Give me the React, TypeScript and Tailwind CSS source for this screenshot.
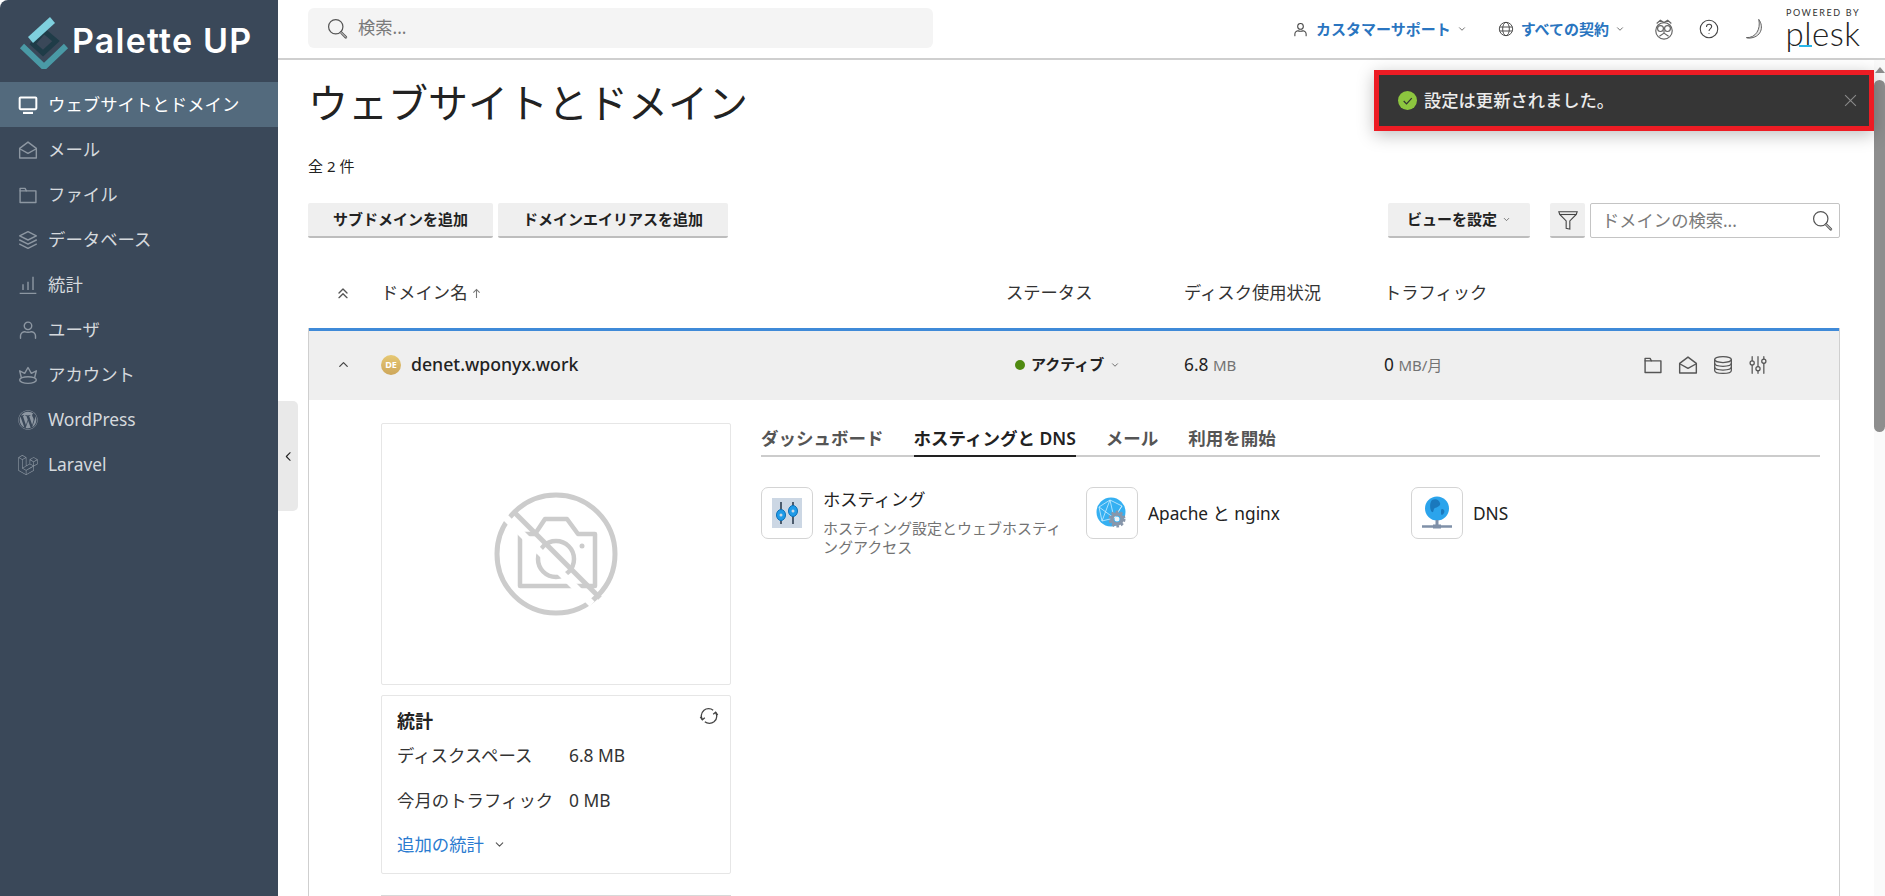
import React from "react";
import { FaWordpress, FaLaravel } from "react-icons/fa";

const font = { fontFamily: '"Noto Sans","Open Sans","Noto Sans CJK JP",sans-serif' };

type IP = { className?: string };
const S = ({ className, children, vb = "0 0 24 24", sw = 1.5 }: { className?: string; children: React.ReactNode; vb?: string; sw?: number }) => (
  <svg viewBox={vb} fill="none" stroke="currentColor" strokeWidth={sw} strokeLinecap="round" strokeLinejoin="round" className={className}>{children}</svg>
);
const Monitor = ({ className }: IP) => <S className={className} sw={2.4}><rect x="2" y="3" width="20" height="14" rx="1" /><path d="M6 21.500h12" strokeWidth="2.600" strokeLinecap="butt" /></S>;
const MailOpen = ({ className }: IP) => <S className={className} sw={1.7}><path d="M2 10 12 2.500 22 10v11.500H2z" /><path d="M2 10.500 12 16l10-5.500" /></S>;
const Folder = ({ className }: IP) => <S className={className} sw={1.7}><path d="M2.500 21V4h6l1.500 3h11.500v14z" /><path d="M2.500 7H10" /></S>;
const Layers = ({ className }: IP) => <S className={className} sw={1.7}><path d="M12 2 22 7l-10 5L2 7z" /><path d="M2 12l10 5 10-5" /><path d="M2 17l10 5 10-5" /></S>;
const Bars = ({ className }: IP) => <S className={className} sw={1.7}><path d="M2 22h20M6 18v-7M12 18V8M18 18V2" strokeLinecap="butt" /></S>;
const UserI = ({ className }: IP) => <S className={className} sw={1.7}><circle cx="12" cy="7" r="4.500" /><path d="M3 22v-3c0-3 3-5 5-5 1.500 1 6.500 1 8 0 2 0 5 2 5 5v3" /></S>;
const Crown = ({ className }: IP) => <S className={className} sw={1.7}><path d="M4 15 2 7l6 3 4-7 4 7 6-3-2 8" /><ellipse cx="12" cy="18" rx="10" ry="4" /></S>;
const Chev = ({ className, d = "M6 9l6 6 6-6" }: IP & { d?: string }) => <S className={className} sw={2}><path d={d} /></S>;
const SearchI = ({ className }: IP) => (
  <svg viewBox="0 0 24 24" fill="none" stroke="currentColor" className={className}>
    <circle cx="10" cy="10" r="8.200" strokeWidth="1.400" />
    <path d="M16 16.500l5.500 5.500" strokeWidth="3" strokeLinecap="round" />
    <path d="M16 16.500l5.500 5.500" strokeWidth="1" stroke="#fff" strokeLinecap="round" />
  </svg>
);
const Sliders = ({ className }: IP) => (
  <S className={className}>
    <path d="M5 2v5M5 12v10M12 2v12M12 19v3M19 2v3M19 10v12" />
    <circle cx="5" cy="9.500" r="2.500" /><circle cx="12" cy="16.500" r="2.500" /><circle cx="19" cy="7.500" r="2.500" />
  </S>
);
const Db = ({ className }: IP) => (
  <S className={className}>
    <ellipse cx="12" cy="5.500" rx="10" ry="3.500" />
    <path d="M2 5.500v13c0 2 4.500 3.500 10 3.500s10-1.500 10-3.500v-13" />
    <path d="M2 10c0 2 4.500 3.500 10 3.500S22 12 22 10M2 14.500c0 2 4.500 3.500 10 3.500s10-1.500 10-3.500" />
  </S>
);

const nav: { t: string; I: React.ComponentType<IP>; a?: boolean }[] = [
  { t: "ウェブサイトとドメイン", I: Monitor, a: true },
  { t: "メール", I: MailOpen },
  { t: "ファイル", I: Folder },
  { t: "データベース", I: Layers },
  { t: "統計", I: Bars },
  { t: "ユーザ", I: UserI },
  { t: "アカウント", I: Crown },
  { t: "WordPress", I: FaWordpress },
  { t: "Laravel", I: FaLaravel },
];

function Sidebar() {
  return (
    <aside className="w-[278px] shrink-0 bg-[#3a4859] rounded-tl-[8px] h-full">
      <div className="h-[82px] flex items-center pl-[19px] gap-[3px]">
        <svg viewBox="0 0 50 56" className="w-[50px] h-[56px] shrink-0">
          <path d="M25 18l12 10-13 12-10-9z" fill="none" stroke="#1f3c48" strokeWidth="5" />
          <path d="M9 24 31 4l5 6-22 20z" fill="#7fd0de" />
          <path d="M3 33l22 21 22-21" fill="none" stroke="#4a9aa6" strokeWidth="6" />
        </svg>
        <span className="text-white text-[34px] font-semibold tracking-[1.200px] leading-none whitespace-nowrap" style={{ fontFamily: '"Inter",sans-serif' }}>Palette UP</span>
      </div>
      <nav>
        {nav.map(({ t, I, a }) => (
          <div key={t} className={`h-[45px] flex items-center pl-[18px] gap-[10px] text-[17.400px] ${a ? "bg-[#536a7d] text-white" : "text-[#d5d9dd]"}`}>
            <I className={`w-[20px] h-[20px] shrink-0 ${a ? "text-white" : "text-[#8d97a2]"}`} />
            <span>{t}</span>
          </div>
        ))}
      </nav>
    </aside>
  );
}

function Header() {
  return (
    <header className="h-[60px] shrink-0 border-b-2 border-[#cfcfcf] flex items-center pl-[30px] pr-[24px] bg-white">
      <div className="w-[625px] h-[40px] -mt-[2px] bg-[#f4f4f4] rounded-[6px] flex items-center pl-[19px] gap-[10px] text-[#7a7a7a] text-[17.300px]">
        <SearchI className="w-[21px] h-[21px] text-[#555]" />
        <span>検索...</span>
      </div>
      <div className="ml-auto flex items-center h-full text-[#555]">
        <UserI className="w-[15px] h-[15px] text-[#444]" />
        <span className="ml-[8px] text-[15px] font-bold text-[#2a75c0]">カスタマーサポート</span>
        <Chev className="w-[10px] h-[10px] ml-[6px]" />
        <svg viewBox="0 0 24 24" fill="none" stroke="#444" strokeWidth="1.400" className="w-[16px] h-[16px] ml-[31px]">
          <circle cx="12" cy="12" r="10" /><ellipse cx="12" cy="12" rx="5" ry="10" /><path d="M2.500 9h19M2.500 15h19" />
        </svg>
        <span className="ml-[7px] text-[15px] font-bold text-[#2a75c0]">すべての契約</span>
        <Chev className="w-[10px] h-[10px] ml-[6px]" />
        <svg viewBox="0 0 24 24" fill="none" stroke="#666" strokeWidth="1.300" className="w-[22px] h-[22px] ml-[28px]">
          <path d="M4 6 8 2.500l4 2.500 4-2.500L20 6" /><circle cx="12" cy="14" r="9" /><circle cx="8.200" cy="11.500" r="3.200" /><circle cx="15.800" cy="11.500" r="3.200" /><path d="M12 13.500v3M7 20l5-3.500 5 3.500" />
        </svg>
        <svg viewBox="0 0 24 24" fill="none" stroke="#444" strokeWidth="1.300" className="w-[20px] h-[20px] ml-[24px]">
          <circle cx="12" cy="12" r="10.500" /><path d="M9 9.500c0-2 1.500-3.200 3.200-3.200 1.800 0 3 1.200 3 2.800 0 2.500-3.200 2.500-3.200 5.400" /><path d="M12 17.500v.500" strokeWidth="1.800" />
        </svg>
        <svg viewBox="0 0 24 24" fill="#e8e8e8" stroke="#555" strokeWidth="1" className="w-[22px] h-[22px] ml-[26px]">
          <path d="M15 1.500c6 8 3 20-11 20.500 -1 0-2-.300-2.500-.600 10 .600 16-9 13.500-19.900z" />
        </svg>
        <div className="ml-[18px] w-[76px] flex flex-col items-center relative pb-[2px]">
          <span className="text-[9px] leading-[10px] tracking-[1.600px] text-[#333] whitespace-nowrap" style={{ fontFamily: '"Lato",sans-serif' }}>POWERED BY</span>
          <span className="text-[33px] leading-[31px] text-[#222] font-light tracking-[0.500px]" style={{ fontFamily: '"Lato",sans-serif' }}>plesk</span>
          <span className="absolute left-[14px] bottom-[4px] w-[13px] h-[2px] bg-[#29b6e8]" />
        </div>
      </div>
    </header>
  );
}

function Btn({ children, className = "" }: { children: React.ReactNode; className?: string }) {
  return <div className={`h-[35px] flex items-center justify-center bg-[#efefef] rounded-[2px] border-b-2 border-[#bdbdbd] text-[15px] font-bold text-[#222] ${className}`}>{children}</div>;
}

function CameraOff() {
  return (
    <svg viewBox="0 0 132 132" fill="none" stroke="#cccccc" strokeWidth="5" className="w-[132px] h-[132px]">
      <circle cx="66" cy="66" r="59" />
      <path d="M30 46h15l10-15h22l11 15h17v52H30z" strokeLinejoin="round" strokeWidth="4.500" />
      <circle cx="66" cy="71" r="18" strokeWidth="4.500" />
      <circle cx="92" cy="58" r="2.500" fill="#ccc" stroke="none" />
      <path d="M16 22l90 90" stroke="#fff" strokeWidth="7" transform="translate(-4 4)" />
      <path d="M23 23l87 87" stroke="#cccccc" strokeWidth="5" />
    </svg>
  );
}

function Tile({ icon, title, desc }: { icon: React.ReactNode; title: string; desc?: string }) {
  return (
    <div className={`flex gap-[10px] w-[325px] ${desc ? "" : "items-center h-[52px]"}`}>
      <div className="w-[52px] h-[52px] shrink-0 border border-[#d4d4d4] rounded-[7px] flex items-center justify-center">{icon}</div>
      <div className="w-[242px] pt-[1px]">
        <div className={`text-[17.300px] text-[#222] ${desc ? "leading-[24px]" : ""}`}>{title}</div>
        {desc && <div className="text-[15px] leading-[19px] text-[#737373] mt-[7px]">{desc}</div>}
      </div>
    </div>
  );
}

function Row() {
  return (
    <section className="border-x border-[#cfcfcf] flex-1 min-h-0">
      <div className="h-[72px] pb-[2px] bg-[#efefef] border-t-[3px] border-[#3f8ad8] grid grid-cols-[72px_625px_178px_200px_1fr] items-center">
        <Chev d="M6 15l6-6 6 6" className="w-[15px] h-[15px] ml-[27px] text-[#444]" />
        <div className="flex items-center gap-[10px]">
          <div className="w-[20px] h-[20px] rounded-full bg-gradient-to-b from-[#e6c873] to-[#cda65a] flex items-center justify-center text-white text-[9px] font-bold">DE</div>
          <span className="text-[17.700px] font-medium text-[#222] leading-none">denet.wponyx.work</span>
        </div>
        <div className="flex items-center pl-[9px]">
          <span className="w-[10px] h-[10px] rounded-full bg-[#4f8a10]" />
          <span className="ml-[6px] text-[15px] font-bold text-[#222]">アクティブ</span>
          <Chev className="w-[10px] h-[10px] ml-[6px] text-[#555]" />
        </div>
        <div className="text-[17.300px] text-[#222]">6.8 <span className="text-[15px] text-[#737373]">MB</span></div>
        <div className="flex items-center">
          <div className="text-[17.300px] text-[#222] w-[259px]">0 <span className="text-[15px] text-[#737373]">MB/月</span></div>
          <div className="flex items-center gap-[15px] text-[#555]">
            <Folder className="w-[20px] h-[20px]" />
            <MailOpen className="w-[20px] h-[20px]" />
            <Db className="w-[20px] h-[20px]" />
            <Sliders className="w-[20px] h-[20px]" />
          </div>
        </div>
      </div>
      <div className="pl-[72px] pt-[23px] flex">
        <div className="w-[350px] shrink-0">
          <div className="h-[262px] border border-[#e6e6e6] rounded-[2px] flex items-center justify-center">
            <CameraOff />
          </div>
          <div className="h-[179px] mt-[10px] border border-[#e6e6e6] rounded-[2px] relative pl-[15px] pt-[12px] text-[17.400px] text-[#333]">
            <svg viewBox="0 0 24 24" fill="none" stroke="#444" strokeWidth="1.500" className="absolute right-[11px] top-[10px] w-[20px] h-[20px]">
              <path d="M4 16a9 9 0 0 1 2-11c3-2.500 8-2.500 11 0" /><path d="M20 8a9 9 0 0 1-2 11c-3 2.500-8 2.500-11 0" /><path d="M1.500 13 4 16.500 7 14M22.500 11 20 7.500 17 10" />
            </svg>
            <div className="text-[18px] font-bold text-[#222] leading-[26px]">統計</div>
            <div className="grid grid-cols-[172px_1fr] auto-rows-[45px] items-center -mt-[1px]">
              <span>ディスクスペース</span><span>6.8 MB</span>
              <span>今月のトラフィック</span><span>0 MB</span>
            </div>
            <div className="flex items-center text-[#2a7bd0] mt-[-1px] h-[45px]">
              追加の統計
              <Chev className="w-[13px] h-[13px] ml-[9px] text-[#555]" />
            </div>
          </div>
          <div className="h-px bg-[#d8d8d8] mt-[21px]" />
        </div>
        <div className="ml-[30px] flex-1 pr-[19px]">
          <div className="flex gap-[30px] border-b-2 border-[#ccc] h-[34px] text-[17.500px] font-semibold text-[#555]">
            <span className="leading-[31px]">ダッシュボード</span>
            <span className="leading-[31px] text-[#222] border-b-2 border-[#222] h-[34px]">ホスティングと DNS</span>
            <span className="leading-[31px]">メール</span>
            <span className="leading-[31px]">利用を開始</span>
          </div>
          <div className="flex mt-[30px]">
            <Tile
              title="ホスティング"
              desc="ホスティング設定とウェブホスティングアクセス"
              icon={
                <svg viewBox="0 0 30 30" className="w-[30px] h-[30px]">
                  <rect width="30" height="30" fill="#ccd7e4" />
                  <path d="M9 4v22M21 4v22" stroke="#2c3e50" strokeWidth="1.600" />
                  <ellipse cx="9" cy="17" rx="4.500" ry="5.500" fill="#1f9be8" stroke="#0e6fb5" strokeWidth="1" />
                  <ellipse cx="21" cy="13" rx="4.500" ry="5.500" fill="#1f9be8" stroke="#0e6fb5" strokeWidth="1" />
                  <circle cx="9" cy="17" r="1.500" fill="#ccd7e4" /><circle cx="21" cy="13" r="1.500" fill="#ccd7e4" />
                </svg>
              }
            />
            <Tile
              title="Apache と nginx"
              icon={
                <svg viewBox="0 0 32 32" className="w-[32px] h-[32px]">
                  <circle cx="15" cy="15" r="14.500" fill="#35b0f2" />
                  <path d="M3 10l11-7 12 6-8 12-12 3zM14 3l4 18M3 10l15 11M26 9l-8 12M6 24l8-21" stroke="#cdeeff" strokeWidth="0.800" fill="none" />
                  <circle cx="21" cy="22" r="7" fill="none" stroke="#8796aa" strokeWidth="3" strokeDasharray="2.500 2" />
                  <circle cx="21" cy="22" r="5" fill="none" stroke="#8796aa" strokeWidth="3.500" />
                  <circle cx="21" cy="22" r="2.500" fill="#eef3f8" />
                </svg>
              }
            />
            <Tile
              title="DNS"
              icon={
                <svg viewBox="0 0 32 34" className="w-[32px] h-[34px]">
                  <circle cx="16" cy="12.500" r="12" fill="#2ba4ec" />
                  <path d="M11 4c4-2 7 0 8 3s-3 4-5 5-1 5-3 4-3-9 0-12zM21 13c2 0 3 2 2 4s-3 3-3 0 0-4 1-4z" fill="#1a78bd" />
                  <path d="M1 30.500h30" stroke="#7f90a8" strokeWidth="2.500" />
                  <path d="M16 24v6" stroke="#7f90a8" strokeWidth="3" />
                  <rect x="12" y="28.500" width="8" height="4" fill="#7f90a8" />
                </svg>
              }
            />
          </div>
        </div>
      </div>
    </section>
  );
}

export default function App() {
  return (
    <div className="w-[1885px] h-[896px] flex overflow-hidden bg-white text-[#222] relative" style={font}>
      <Sidebar />
      <div className="flex-1 min-w-0 flex flex-col">
        <Header />
        <div className="flex-1 min-h-0 flex">
          <main className="flex-1 min-w-0 pl-[30px] pr-[34px] flex flex-col">
            <h1 className="text-[40px] leading-[52px] font-normal text-[#222] mt-[17px]">ウェブサイトとドメイン</h1>
            <div className="text-[15px] leading-[20px] mt-[27px]">全 2 件</div>
            <div className="flex items-center mt-[27px]">
              <Btn className="w-[185px]">サブドメインを追加</Btn>
              <Btn className="w-[230px] ml-[5px]">ドメインエイリアスを追加</Btn>
              <Btn className="w-[142px] ml-auto gap-[5px]">ビューを設定<Chev className="w-[9px] h-[9px] text-[#555]" /></Btn>
              <Btn className="w-[35px] ml-[20px]">
                <svg viewBox="0 0 24 24" fill="none" stroke="#444" strokeWidth="1.200" className="w-[22px] h-[22px]"><path d="M2 3h20l-1 3-7 7v9l-4-1v-8L3 6z" /><path d="M3 6h18" /></svg>
              </Btn>
              <div className="w-[250px] h-[35px] ml-[5px] border border-[#c4c4c4] rounded-[2px] flex items-center pl-[11px] pr-[6px] text-[17.300px] text-[#7a7a7a]">
                <span>ドメインの検索...</span>
                <SearchI className="w-[21px] h-[21px] ml-auto text-[#555]" />
              </div>
            </div>
            <div className="grid grid-cols-[73px_625px_178px_200px_1fr] items-center h-[90px] pt-[20px] text-[17.300px] text-[#333]">
              <Chev d="M6 12l6-6 6 6M6 19l6-6 6 6" className="w-[16px] h-[16px] ml-[27px] text-[#555]" />
              <div className="flex items-center gap-[5px]">ドメイン名
                <svg viewBox="0 0 10 12" fill="none" stroke="#777" strokeWidth="1.200" className="w-[9px] h-[11px]"><path d="M5 11V1.500M1.500 5 5 1.500 8.500 5" /></svg>
              </div>
              <span>ステータス</span>
              <span>ディスク使用状況</span>
              <span>トラフィック</span>
            </div>
            <Row />
          </main>
          <div className="w-[11px] shrink-0 pt-[7px] flex flex-col items-center bg-[#fafafa]">
            <div className="w-0 h-0 border-x-[5px] border-x-transparent border-b-[6px] border-b-[#8e8e8e]" />
            <div className="w-[11px] h-[352px] mt-[7px] rounded-full bg-[#8e8e8e]" />
          </div>
        </div>
      </div>
      <div className="absolute left-[1374px] top-[70px] w-[500px] h-[61px] bg-[#363636] border-[5px] border-[#ed1c24] shadow-[0_4px_16px_rgba(0,0,0,0.25)] flex items-center pl-[19px] pr-[12px]">
        <svg viewBox="0 0 20 20" className="w-[19px] h-[19px] shrink-0">
          <circle cx="10" cy="10" r="10" fill="#8dc63f" />
          <path d="M6 10.500l3 3 5.500-6" fill="none" stroke="#333" strokeWidth="1.300" />
        </svg>
        <span className="ml-[7px] text-[17.300px] text-[#ececec] font-medium">設定は更新されました。</span>
        <svg viewBox="0 0 12 12" className="w-[13px] h-[13px] ml-auto" stroke="#8a8a8a" strokeWidth="1"><path d="M1 1l10 10M11 1 1 11" /></svg>
      </div>
      <div className="absolute left-[278px] top-[401px] w-[20px] h-[110px] bg-[#e9e9e9] rounded-r-[5px] flex items-center justify-center">
        <Chev d="M15 5l-7 7 7 7" className="w-[13px] h-[13px] text-[#222]" />
      </div>
    </div>
  );
}
